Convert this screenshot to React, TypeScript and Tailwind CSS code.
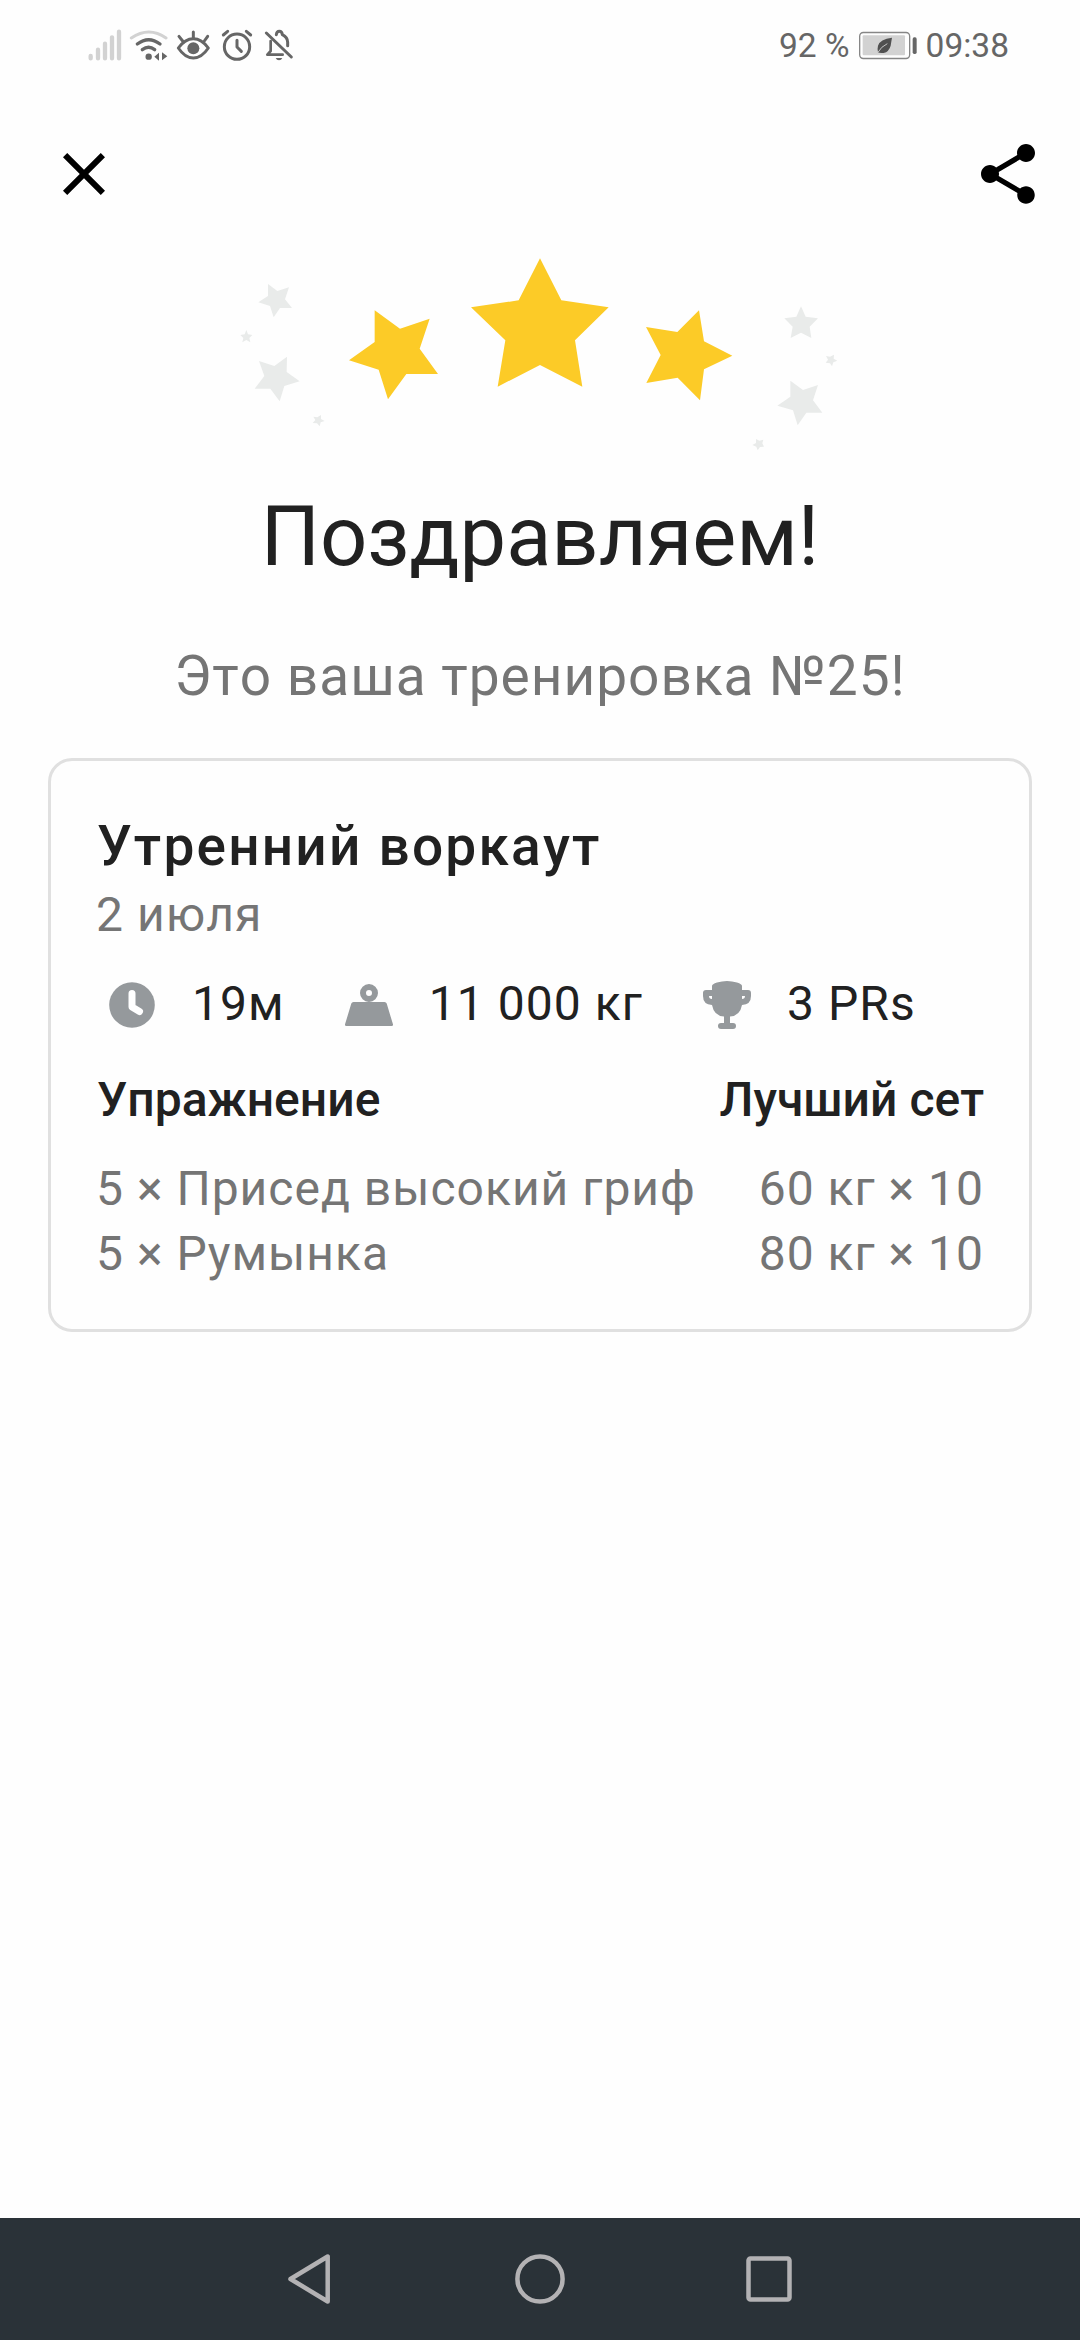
import type { ReactNode } from 'react'
import { MdClose, MdShare } from 'react-icons/md'

const GOLD_STARS = [
  '960,55 1024,181 1166,202 1065,301 1087,440 960,375 833,440 856,301 753,202 896,181',
  '464,211 540,266 629,236 599,326 654,402 559,402 504,478 476,389 387,361 464,306',
  '1278,261 1372,276 1437,211 1452,304 1537,347 1452,388 1440,481 1373,413 1279,429 1322,345',
]

const GRAY_STARS = [
  '144,132 172,153 207,142 195,178 216,204 180,204 161,232 150,198 115,187 144,168',
  '79,270 84,283 97,285 88,294 91,307 79,300 67,307 70,294 61,285 74,283',
  '117,363 163,378 201,350 200,396 239,424 193,438 179,484 151,446 104,446 133,408',
  '280,530 292,532 303,525 303,537 314,543 302,547 299,559 291,550 278,549 286,540',
  '1743,199 1757,230 1794,235 1769,260 1774,294 1743,278 1712,294 1718,260 1693,235 1729,230',
  '1818,348 1830,350 1842,344 1841,356 1852,362 1840,367 1836,379 1830,370 1817,368 1824,359',
  '1711,422 1749,450 1794,435 1779,481 1807,518 1759,518 1733,556 1719,511 1672,497 1711,470',
  '1608,597 1618,602 1630,599 1627,610 1632,620 1620,621 1613,631 1609,620 1597,615 1608,609',
]

const exercises = [
  { name: '5 × Присед высокий гриф', best: '60 кг × 10' },
  { name: '5 × Румынка', best: '80 кг × 10' },
]

function StatusBar() {
  return (
    <div className="flex h-[91px] items-center justify-between pl-[87px] pr-[71px] text-[33.5px] leading-[40px] text-[#666666]">
      <div className="flex pb-[2px]">
        {/* signal */}
        <svg className="h-[35px] w-[40px]" viewBox="51 51 120 105" fill="none" stroke="#d2d2d2" strokeWidth="13" strokeLinecap="round">
          <path d="M62 138v7M84 119v26M105 101v44M126 82v63M147 65v80" />
        </svg>
        {/* wifi */}
        <svg className="h-[35px] w-[45px]" viewBox="171 51 135 105" fill="none" strokeLinecap="round">
          <path d="M184 84Q237 48 288 84" stroke="#d2d2d2" strokeWidth="9" />
          <path d="M202 102Q236 76 270 102M217 119Q236 105 254 119" stroke="#666" strokeWidth="10" />
          <circle cx="236" cy="140" r="9.5" fill="#666" />
          <path d="M253 140l14-12v24zM292 139l-16-12v24z" fill="#666" />
        </svg>
        {/* eye comfort */}
        <svg className="h-[35px] w-[45px]" viewBox="306 51 135 105" fill="none" stroke="#666" strokeLinecap="round">
          <path d="M325 114Q345 86 370 86T415 114Q395 144 370 144T325 114z" strokeWidth="9" strokeLinejoin="round" />
          <path d="M370 66v19M327 79l11 14M413 79l-10 14" strokeWidth="9" />
          <circle cx="370" cy="115" r="18" fill="#666" stroke="none" />
        </svg>
        {/* alarm */}
        <svg className="h-[35px] w-[42px]" viewBox="441 51 126 105" fill="none" stroke="#666" strokeLinecap="round">
          <circle cx="501" cy="110" r="38" strokeWidth="9" />
          <path d="M501 91v20l13 13" strokeWidth="9" strokeLinejoin="round" />
          <path d="M460 75l13-11M542 75l-13-11" strokeWidth="9" />
        </svg>
        {/* muted bell */}
        <svg className="h-[35px] w-[38px]" viewBox="567 51 114 105" fill="none" stroke="#666" strokeLinecap="round">
          <path d="M589 69l75 72" strokeWidth="9" />
          <path d="M602 93v30l-10 11h46" strokeWidth="8" strokeLinejoin="round" />
          <path d="M619 74Q620 64 628 64T637 74Q653 82 653 97v10" strokeWidth="9" strokeLinejoin="round" />
          <path d="M617 144h20q-3 7-10 7t-10-7z" fill="#666" stroke="none" />
        </svg>
      </div>
      <div className="flex items-center">
        <span className="mr-[8px] pt-px">92 %</span>
        <svg className="mr-[8px] h-[29px] w-[60px]" viewBox="291 63 180 87">
          <rect x="296" y="67.5" width="150" height="78" rx="11" fill="none" stroke="#868686" strokeWidth="4" />
          <rect x="305" y="76" width="127" height="60" rx="3" fill="#d2d2d2" />
          <rect x="455" y="82" width="12" height="50" rx="5" fill="#666" />
          <path d="M393 83Q357 87 351 107Q348 119 351 127Q354 130 368 129Q384 125 389 107Q391 94 393 83z" fill="#505050" />
          <path d="M351 127Q360 110 379 101" fill="none" stroke="#c4c4c4" strokeWidth="3" />
        </svg>
        <span className="pt-px">09:38</span>
      </div>
    </div>
  )
}

function Stars() {
  return (
    <svg className="mx-auto mt-[30px] h-[220px] w-[640px]" viewBox="0 0 1920 660">
      {GOLD_STARS.map((points) => <polygon key={points} points={points} fill="#fccb27" />)}
      {GRAY_STARS.map((points) => <polygon key={points} points={points} fill="#e9ebea" />)}
    </svg>
  )
}

function Stat({ icon, children }: { icon: ReactNode; children: ReactNode }) {
  return (
    <div className="flex items-center gap-6">
      {icon}
      <span className="pb-[3px] leading-[57px]">{children}</span>
    </div>
  )
}

function ClockIcon() {
  return (
    <svg className="size-[72px]" viewBox="0 0 72 72">
      <circle cx="36" cy="36" r="22.8" fill="#95999c" />
      <path d="M36 24.5v13.500l7.500 4.500" fill="none" stroke="#fff" strokeWidth="7" strokeLinecap="round" strokeLinejoin="round" />
    </svg>
  )
}

function WeightIcon() {
  return (
    <svg className="size-[72px]" viewBox="0 0 72 72">
      <circle cx="36" cy="24" r="6" fill="none" stroke="#95999c" strokeWidth="6" />
      <path d="M20.500 33h31q1.700 0 2.200 1.600l6.200 20.500q.6 1.900-1.400 1.900H13.500q-2 0-1.400-1.900l6.200-20.500q.5-1.600 2.200-1.600z" fill="#95999c" />
    </svg>
  )
}

function TrophyIcon() {
  return (
    <svg className="size-[72px]" viewBox="0 0 72 72" fill="#95999c">
      <path d="M21 17q0-2 5-3.500Q31 12 36 12t10 1.500q5 1.500 5 3.500v4h6q3 0 3 3v3q0 8.500-9 9Q49 47 39 47.500V54h3q3 0 3 3t-3 3H30q-3 0-3-3t3-3h3v-6.500Q23 47 21 36q-9-.5-9-9v-3q0-3 3-3h6zM18 27q0 3 3 3v-3zM54 27h-3v3q3 0 3-3z" fillRule="evenodd" />
    </svg>
  )
}

function WorkoutCard() {
  return (
    <section className="mx-12 mt-[50px] rounded-[24px] border-[3px] border-[#e0e0e0] px-[45px] pb-[43px] pt-[53px] text-[48px] text-[#757575]">
      <h2 className="ml-px text-[55px] font-medium leading-[64px] tracking-[2.2px] text-[#212121]">Утренний воркаут</h2>
      <p className="mt-2 leading-[57px] tracking-[1.1px]">2 июля</p>

      <div className="mt-[26px] flex gap-12 whitespace-nowrap tracking-[1.05px] text-[#212121]">
        <Stat icon={<ClockIcon />}>19м</Stat>
        <Stat icon={<WeightIcon />}>11 000 кг</Stat>
        <Stat icon={<TrophyIcon />}>3 PRs</Stat>
      </div>

      <div className="mb-[28px] ml-px mt-[30px] flex justify-between font-medium leading-[57px] text-[#212121]">
        <span>Упражнение</span>
        <span>Лучший сет</span>
      </div>

      {exercises.map((item) => (
        <div key={item.name} className="flex justify-between whitespace-nowrap leading-[65px] tracking-[1px]">
          <span>{item.name}</span>
          <span>{item.best}</span>
        </div>
      ))}
    </section>
  )
}

function NavBar() {
  return (
    <nav className="mt-auto flex h-[122px] items-center justify-center gap-[169px] bg-[#2a3238]">
      <svg className="size-[60px]" viewBox="0 0 60 60" fill="none" stroke="#b3b2b4" strokeWidth="4.5" strokeLinejoin="round">
        <path d="M46.700 7.500v45L9.500 30z" />
      </svg>
      <svg className="size-[60px]" viewBox="0 0 60 60" fill="none" stroke="#b3b2b4" strokeWidth="4.5">
        <circle cx="30" cy="30" r="22.6" />
      </svg>
      <svg className="size-[60px]" viewBox="0 0 60 60" fill="none" stroke="#b3b2b4" strokeWidth="4.5">
        <rect x="9.5" y="9.5" width="41" height="41" rx="2" />
      </svg>
    </nav>
  )
}

export default function App() {
  return (
    <div className="flex h-[2340px] w-[1080px] flex-col overflow-hidden bg-[#fefefe] font-['Roboto',sans-serif] [font-kerning:none]">
      <StatusBar />
      <header className="mt-[47px] flex justify-between pl-12 pr-9 text-black">
        <MdClose size={72} />
        <MdShare size={72} />
      </header>
      <Stars />
      <h1 className="mt-[28px] text-center text-[83px] leading-[97px] text-[#212121]">Поздравляем!</h1>
      <p className="mt-[59px] text-center text-[55px] leading-[64px] tracking-[1px] text-[#757575]">Это ваша тренировка №25!</p>
      <WorkoutCard />
      <NavBar />
    </div>
  )
}
